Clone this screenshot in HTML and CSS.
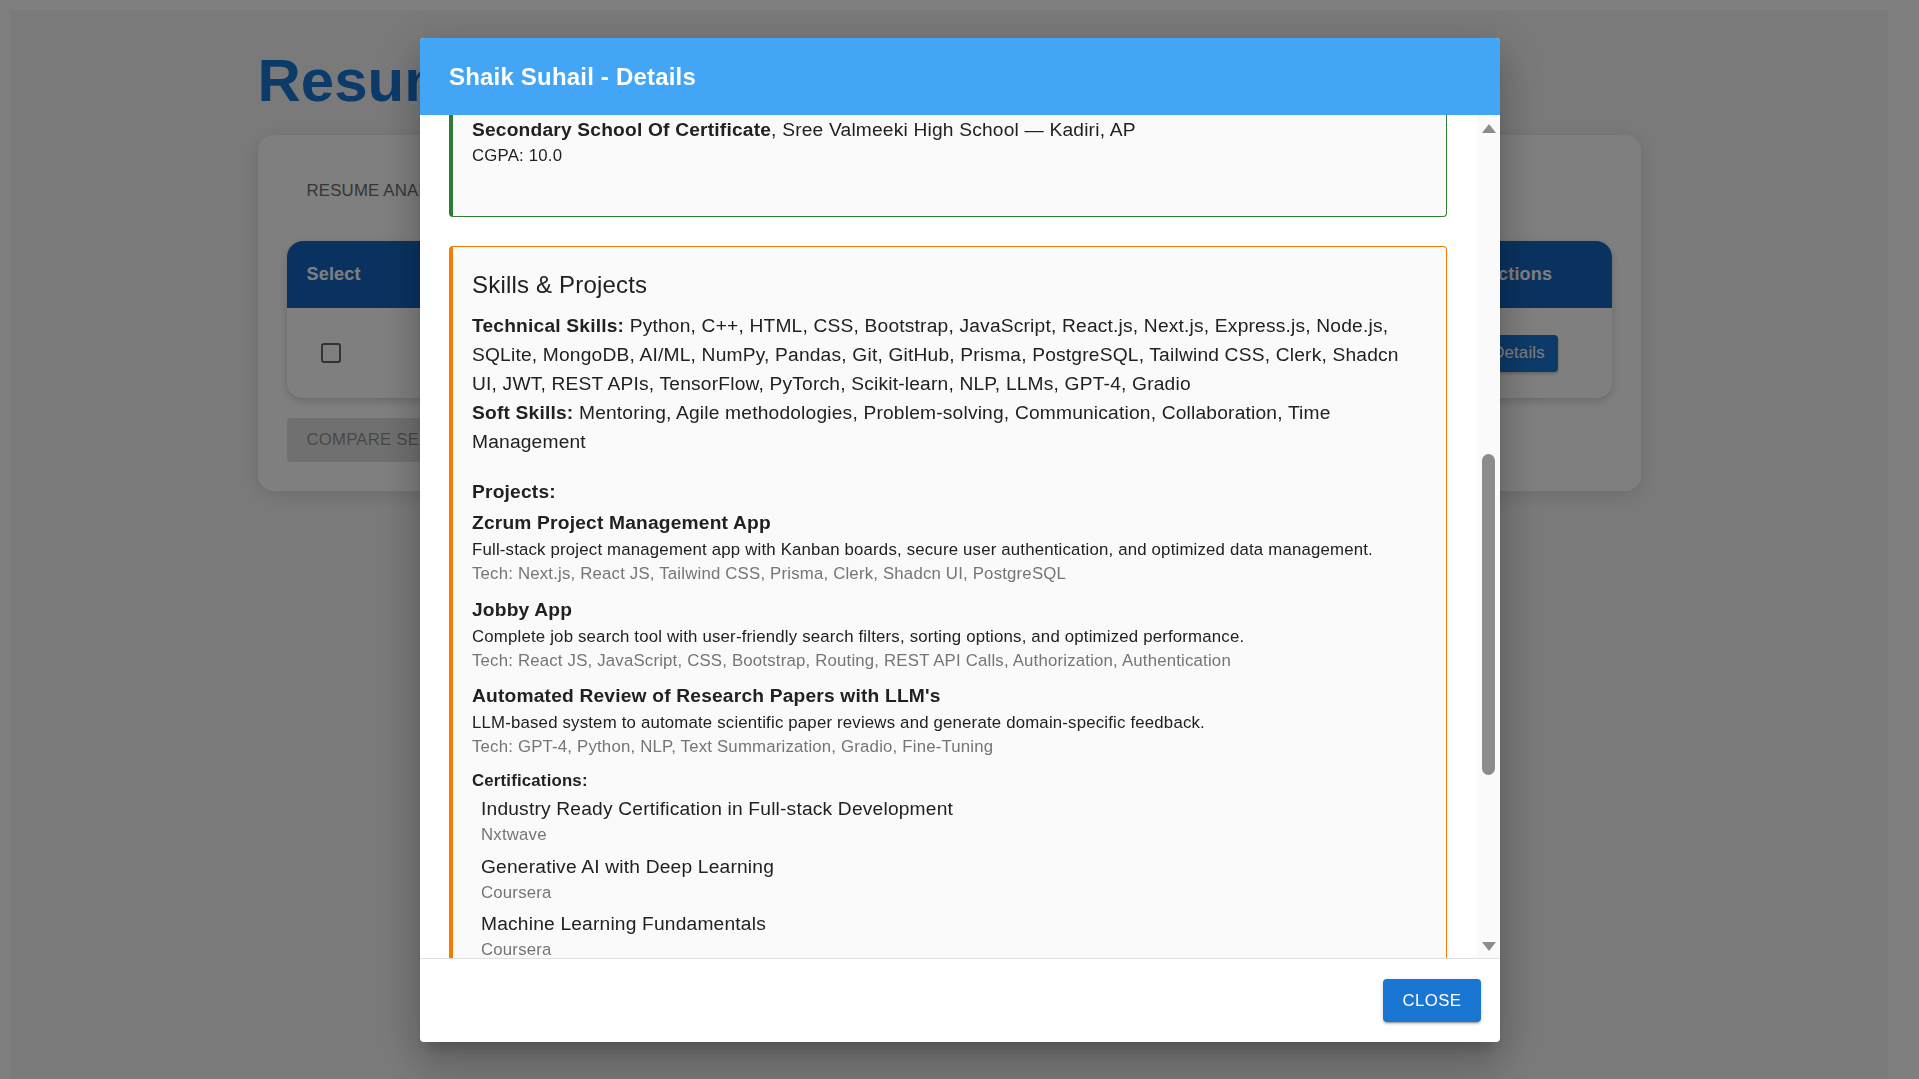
FILE: index.html
```html
<!DOCTYPE html>
<html lang="en">
<head>
<meta charset="utf-8">
<title>Resume Analyzer</title>
<link rel="stylesheet" href="styles.css">
</head>
<body>
<div class="app">
  <main class="page">
    <h1 class="page-title">Resume Analyzer Dashboard</h1>
    <section class="panel">
      <div class="tabs">
        <div class="tab">Resume Analysis</div>
        <div class="tab">Job Matching</div>
      </div>
      <div class="table">
        <div class="thead row-grid">
          <div class="cell">Select</div>
          <div class="cell">Name</div>
          <div class="cell">Email</div>
          <div class="cell">ATS Score</div>
          <div class="cell">Experience</div>
          <div class="cell cell-center">Actions</div>
        </div>
        <div class="trow row-grid">
          <div class="cell"><span class="checkbox"></span></div>
          <div class="cell">Shaik Suhail</div>
          <div class="cell">shaiksuhail@example.com</div>
          <div class="cell">86</div>
          <div class="cell">1 year</div>
          <div class="cell cell-center"><button class="details-btn">Details</button></div>
        </div>
      </div>
      <button class="compare-btn">Compare Selected</button>
    </section>
  </main>
</div>

<div class="backdrop"></div>
<div class="dialog-layer">
  <div class="dialog" role="dialog">
    <header class="dialog-title">Shaik Suhail - Details</header>
    <div class="dialog-body">
      <div class="dialog-content">
        <section class="section section-blue">
          <h2 class="section-heading">Personal Information</h2>
          <p class="text-lg"><b>Email:</b> shaiksuhail@example.com</p>
          <p class="text-lg"><b>Phone:</b> +91 98765 43210</p>
          <p class="text-lg"><b>Location:</b> Kadiri, Andhra Pradesh</p>
          <p class="text-lg"><b>LinkedIn:</b> linkedin.com/in/shaik-suhail</p>
        </section>

        <section class="section section-purple">
          <h2 class="section-heading">Experience</h2>
          <div class="exp-item">
            <p class="text-lg"><b>MERN Stack Mentor</b></p>
            <p class="text-sm muted">Nxtwave — 2024 to Present</p>
            <p class="text-sm">Mentored learners on full-stack web development, reviewed projects and ran doubt sessions</p>
            <p class="text-sm">with a focus on React.js, Node.js and MongoDB.</p>
          </div>
          <div class="exp-item">
            <p class="text-lg"><b>Machine Learning Intern</b></p>
            <p class="text-sm muted">AI Research Lab — 2023</p>
            <p class="text-sm">Built NLP pipelines for text summarization and evaluated large language models for</p>
            <p class="text-sm">automated review generation.</p>
          </div>
        </section>

        <section class="section section-green">
          <h2 class="section-heading">Education</h2>
          <div class="edu-item">
            <p class="text-lg"><b>Bachelor Of Technology</b>, Computer Science and Engineering — Anantapur, AP</p>
            <p class="text-sm">CGPA: 8.6</p>
          </div>
          <div class="edu-item">
            <p class="text-lg"><b>Intermediate (MPC)</b>, Sri Chaitanya Junior College — Kadiri, AP</p>
            <p class="text-sm">Percentage: 95.4</p>
          </div>
          <div class="edu-item scroll-anchor">
            <p class="text-lg"><b>Secondary School Of Certificate</b>, Sree Valmeeki High School — Kadiri, AP</p>
            <p class="text-sm">CGPA: 10.0</p>
          </div>
        </section>

        <section class="section section-orange">
          <h2 class="section-heading">Skills &amp; Projects</h2>
          <p class="text-lg"><b>Technical Skills:</b> Python, C++, HTML, CSS, Bootstrap, JavaScript, React.js, Next.js, Express.js, Node.js, SQLite, MongoDB, AI/ML, NumPy, Pandas, Git, GitHub, Prisma, PostgreSQL, Tailwind CSS, Clerk, Shadcn UI, JWT, REST APIs, TensorFlow, PyTorch, Scikit-learn, NLP, LLMs, GPT-4, Gradio</p>
          <p class="text-lg"><b>Soft Skills:</b> Mentoring, Agile methodologies, Problem-solving, Communication, Collaboration, Time Management</p>

          <p class="projects-label">Projects:</p>
          <div class="project">
            <p class="project-title">Zcrum Project Management App</p>
            <p class="text-sm">Full-stack project management app with Kanban boards, secure user authentication, and optimized data management.</p>
            <p class="text-sm muted">Tech: Next.js, React JS, Tailwind CSS, Prisma, Clerk, Shadcn UI, PostgreSQL</p>
          </div>
          <div class="project">
            <p class="project-title">Jobby App</p>
            <p class="text-sm">Complete job search tool with user-friendly search filters, sorting options, and optimized performance.</p>
            <p class="text-sm muted">Tech: React JS, JavaScript, CSS, Bootstrap, Routing, REST API Calls, Authorization, Authentication</p>
          </div>
          <div class="project">
            <p class="project-title">Automated Review of Research Papers with LLM's</p>
            <p class="text-sm">LLM-based system to automate scientific paper reviews and generate domain-specific feedback.</p>
            <p class="text-sm muted">Tech: GPT-4, Python, NLP, Text Summarization, Gradio, Fine-Tuning</p>
          </div>

          <p class="certs-label">Certifications:</p>
          <div class="cert">
            <p class="text-lg">Industry Ready Certification in Full-stack Development</p>
            <p class="text-sm muted">Nxtwave</p>
          </div>
          <div class="cert">
            <p class="text-lg">Generative AI with Deep Learning</p>
            <p class="text-sm muted">Coursera</p>
          </div>
          <div class="cert">
            <p class="text-lg">Machine Learning Fundamentals</p>
            <p class="text-sm muted">Coursera</p>
          </div>
          <div class="cert">
            <p class="text-lg">Responsive Web Design</p>
            <p class="text-sm muted">freeCodeCamp</p>
          </div>
          <div class="cert">
            <p class="text-lg">Python for Data Science</p>
            <p class="text-sm muted">IBM</p>
          </div>
        </section>

        <section class="section section-teal">
          <h2 class="section-heading">Achievements</h2>
          <p class="text-lg">Mentored 200+ learners in full-stack development</p>
          <p class="text-lg">Top performer in Nxtwave Industry Ready program</p>
          <p class="text-lg">Built and deployed 10+ full-stack web applications</p>
          <p class="text-lg">Published research work on LLM-based paper reviews</p>
          <p class="text-lg">Active open-source contributor on GitHub</p>
        </section>
      </div>
      <div class="scrollbar" aria-hidden="true">
        <div class="sb-btn sb-up"><span class="sb-arrow-up"></span></div>
        <div class="sb-track"><div class="sb-thumb"></div></div>
        <div class="sb-btn sb-down"><span class="sb-arrow-down"></span></div>
      </div>
    </div>
    <footer class="dialog-actions">
      <button class="close-btn">Close</button>
    </footer>
  </div>
</div>
<script src="script.js"></script>
</body>
</html>
```

FILE: styles.css
```css
* {
  box-sizing: border-box;
}

html,
body {
  margin: 0;
}

body {
  font-family: "Liberation Sans", Arial, sans-serif;
  letter-spacing: 0.19px;
  background: #ffffff;
  color: #212121;
  overflow: hidden;
}

/* ---------- page behind the dialog ---------- */
.app {
  margin: 10px 31px 0 10px;
  min-height: 1069px;
  padding-top: 35px;
  background: #f5f5f5;
}

.page {
  width: 1383px;
  margin: 0 auto;
}

.page-title {
  margin: 0 0 18px;
  font-size: 60px;
  line-height: 72px;
  font-weight: 700;
  letter-spacing: 0;
  color: #1976d2;
  white-space: nowrap;
}

.panel {
  background: #ffffff;
  border-radius: 16px;
  padding: 29px;
  box-shadow: 0 4px 20px rgba(0, 0, 0, 0.12);
}

.tabs {
  display: flex;
  height: 53px;
  margin-bottom: 24px;
}

.tab {
  padding: 16px 20px 0;
  font-size: 16.8px;
  line-height: 21px;
  text-transform: uppercase;
  color: #6b6b6b;
}

.table {
  border-radius: 16px;
  overflow: hidden;
  box-shadow: 0 3px 10px rgba(0, 0, 0, 0.18);
}

.row-grid {
  display: grid;
  grid-template-columns: 120px 280px 320px 200px 219px 186px;
  align-items: center;
}

.thead {
  height: 67px;
  background: #1565c0;
  color: #ffffff;
  font-size: 18px;
  font-weight: 700;
}

.trow {
  height: 90px;
  background: #ffffff;
  font-size: 16.8px;
}

.cell {
  padding: 0 20px;
  white-space: nowrap;
}

.cell-center {
  text-align: center;
}

.checkbox {
  display: block;
  width: 20px;
  height: 20px;
  margin-left: 14px;
  border: 2px solid #666666;
  border-radius: 3px;
}

.details-btn {
  height: 37px;
  padding: 0 13px;
  border: 0;
  border-radius: 4px;
  background: #1976d2;
  color: #ffffff;
  font-family: inherit;
  font-size: 16.8px;
  letter-spacing: 0.19px;
  box-shadow: 0 2px 3px rgba(0, 0, 0, 0.2);
}

.compare-btn {
  display: block;
  margin-top: 20px;
  height: 44px;
  padding: 0 20px;
  border: 0;
  border-radius: 4px;
  background: #e0e0e0;
  color: rgba(0, 0, 0, 0.38);
  font-family: inherit;
  font-size: 16.8px;
  letter-spacing: 0.19px;
  text-transform: uppercase;
}

/* ---------- dialog ---------- */
.backdrop {
  position: fixed;
  inset: 0;
  background: rgba(0, 0, 0, 0.5);
}

.dialog-layer {
  position: fixed;
  inset: 0;
}

.dialog {
  width: 1080px;
  height: 1004px;
  margin: 38px 0 0 420px;
  display: flex;
  flex-direction: column;
  overflow: hidden;
  background: #ffffff;
  border-radius: 4px;
  box-shadow: 0 11px 15px -7px rgba(0, 0, 0, 0.2),
    0 24px 38px 3px rgba(0, 0, 0, 0.14),
    0 9px 46px 8px rgba(0, 0, 0, 0.12);
}

.dialog-title {
  flex: none;
  height: 77px;
  display: flex;
  align-items: center;
  padding: 0 29px;
  background: #42a5f5;
  color: #ffffff;
  font-size: 24px;
  font-weight: 700;
}

.dialog-body {
  flex: 1;
  min-height: 0;
  display: flex;
  border-bottom: 1px solid #e0e0e0;
}

.dialog-content {
  flex: 1;
  min-width: 0;
  position: relative;
  overflow: hidden;
  padding: 29px 30px 29px 29px;
}

/* drawn scrollbar of the dialog body */
.scrollbar {
  flex: none;
  width: 23px;
  display: flex;
  flex-direction: column;
  background: #fafafa;
}

.sb-btn {
  flex: none;
  height: 18px;
  display: flex;
  justify-content: center;
}

.sb-up {
  padding-top: 9px;
}

.sb-down {
  padding-top: 2px;
}

.sb-arrow-up,
.sb-arrow-down {
  width: 0;
  height: 0;
  border-left: 7px solid transparent;
  border-right: 7px solid transparent;
}

.sb-arrow-up {
  border-bottom: 9px solid #8c8c8c;
}

.sb-arrow-down {
  border-top: 9px solid #8c8c8c;
}

.sb-track {
  flex: 1;
  position: relative;
}

.sb-thumb {
  position: absolute;
  left: 5px;
  right: 5px;
  border-radius: 7px;
  background: #8c8c8c;
}

.dialog-actions {
  flex: none;
  height: 83px;
  display: flex;
  align-items: center;
  justify-content: flex-end;
  padding-right: 19px;
}

.close-btn {
  width: 98px;
  height: 43px;
  border: 0;
  border-radius: 4px;
  background: #1976d2;
  color: #ffffff;
  font-family: inherit;
  font-size: 16.8px;
  letter-spacing: 0.4px;
  text-transform: uppercase;
  box-shadow: 0 3px 1px -2px rgba(0, 0, 0, 0.2),
    0 2px 2px 0 rgba(0, 0, 0, 0.14),
    0 1px 5px 0 rgba(0, 0, 0, 0.12);
}

/* ---------- dialog sections ---------- */
.section {
  background: #fafafa;
  border: 1px solid;
  border-left-width: 4px;
  border-radius: 4px;
  padding: 19px 24px 19px 19px;
  margin-bottom: 29px;
}

.section:last-child {
  margin-bottom: 0;
}

.section-blue {
  border-color: #1976d2;
}

.section-purple {
  border-color: #8e24aa;
}

.section-green {
  border-color: #2e7d32;
}

.section-orange {
  border-color: #f57c00;
}

.section-teal {
  border-color: #00897b;
}

.section-heading {
  margin: 0 0 7px;
  font-size: 24px;
  line-height: 38.4px;
  font-weight: 400;
}

.text-lg {
  margin: 0;
  font-size: 19.2px;
  line-height: 29px;
}

.text-sm {
  margin: 0;
  font-size: 16.8px;
  line-height: 24px;
}

.muted {
  color: #757575;
}

.exp-item {
  margin-bottom: 18.7px;
}

.edu-item {
  margin-bottom: 29px;
}

.projects-label {
  margin: 21px 0 2px;
  font-size: 19.2px;
  line-height: 29px;
  font-weight: 700;
}

.project {
  margin-bottom: 8.5px;
}

.project-title {
  margin: 0 0 1px;
  font-size: 19.2px;
  line-height: 29px;
  font-weight: 700;
}

.certs-label {
  margin: 0 0 1px;
  font-size: 16.8px;
  line-height: 25.2px;
  font-weight: 700;
}

.cert {
  padding-left: 9px;
  margin-bottom: 4.8px;
}
```

FILE: script.js
```js
var content = document.querySelector('.dialog-content');
var anchor = document.querySelector('.scroll-anchor');
content.scrollTop = anchor.offsetTop;

var track = document.querySelector('.sb-track');
var thumb = document.querySelector('.sb-thumb');
var trackLength = track.clientHeight;
var visible = content.clientHeight;
var total = content.scrollHeight;
var thumbLength = trackLength * visible / total;
var thumbTop = (trackLength - thumbLength) * content.scrollTop / (total - visible);
thumb.style.height = thumbLength + 'px';
thumb.style.top = thumbTop + 'px';
```
